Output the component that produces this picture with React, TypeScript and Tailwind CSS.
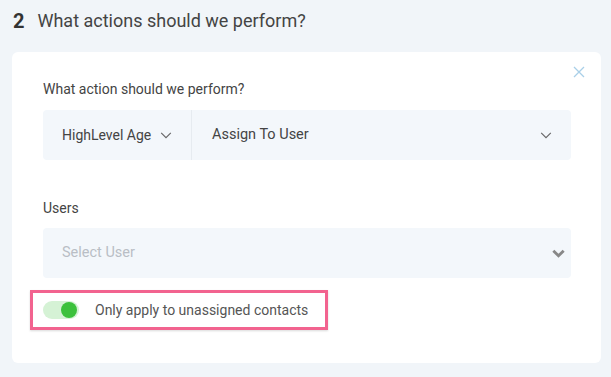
import { useState } from 'react';

function Chevron({ className = '' }: { className?: string }) {
  return (
    <svg viewBox="0 0 16 16" width="14" height="14" className={className} fill="none" stroke="currentColor" strokeWidth="1.3">
      <path d="M2.5 5.5 8 11l5.5-5.5" />
    </svg>
  );
}

export default function App() {
  const [onlyUnassigned, setOnlyUnassigned] = useState(true);

  return (
    <div
      className="w-[611px] h-[377px] bg-[#f1f5f9] overflow-hidden"
      style={{ fontFamily: 'Roboto, "Liberation Sans", sans-serif' }}
    >
      <div className="flex items-center h-[40px] pl-[13px] pt-[1px]">
        <span className="text-[20px] font-bold text-[#333] mr-[13px]">2</span>
        <span className="text-[18px] text-[#444]">What actions should we perform?</span>
      </div>

      <div className="relative ml-[12px] mr-[10px] mt-[12px] h-[311px] bg-white rounded-[6px] pl-[31px] pr-[30px] pt-[28px]">
        <button type="button" className="absolute right-[16px] top-[14px] text-[#a9cfe8]">
          <svg viewBox="0 0 12 12" width="12" height="12" fill="none" stroke="currentColor" strokeWidth="1.3">
            <path d="M1 1l10 10M11 1 1 11" />
          </svg>
        </button>

        <div className="text-[14px] text-[#444] leading-[18px]">What action should we perform?</div>
        <div className="mt-[12px] flex h-[50px] bg-[#f3f7fb] rounded-[4px] text-[14.5px] text-[#444]">
          <div className="flex items-center w-[149px] pl-[19px] border-r border-[#e6ebf0]">
            <span className="text-[14px]">HighLevel Age</span>
            <Chevron className="ml-[8px] text-[#666]" />
          </div>
          <div className="flex-1 flex items-center pl-[20px] pr-[18px]">
            <span>Assign To User</span>
            <Chevron className="ml-auto text-[#666]" />
          </div>
        </div>

        <div className="mt-[39px] text-[14px] text-[#444] leading-[18px]">Users</div>
        <div className="mt-[11px] flex items-center h-[50px] bg-[#f3f7fb] rounded-[4px] pl-[19px] pr-[5px] text-[14.5px]">
          <span className="text-[#b9bec5]">Select User</span>
          <svg viewBox="0 0 16 16" width="15" height="15" className="ml-auto text-[#888]" fill="none" stroke="currentColor" strokeWidth="3">
            <path d="M2.5 5 8 10.5 13.5 5" />
          </svg>
        </div>

        <div className="-ml-[13px] mt-[12px] w-[298px] h-[40px] border-[3px] border-[#f2638f] flex items-center pl-[10px] shadow-[0_1px_2px_rgba(0,0,0,0.15)]">
          <button
            type="button"
            onClick={() => setOnlyUnassigned((v) => !v)}
            className={`relative w-[36px] h-[18px] rounded-full ${onlyUnassigned ? 'bg-[#d5f2d5]' : 'bg-[#e5e7eb]'}`}
          >
            <span
              className={`absolute top-[1px] w-[16px] h-[16px] rounded-full ${onlyUnassigned ? 'left-[18px] bg-[#3cc13c]' : 'left-[1px] bg-white'}`}
            />
          </button>
          <span className="ml-[16px] text-[14px] text-[#555]">Only apply to unassigned contacts</span>
        </div>
      </div>
    </div>
  );
}
